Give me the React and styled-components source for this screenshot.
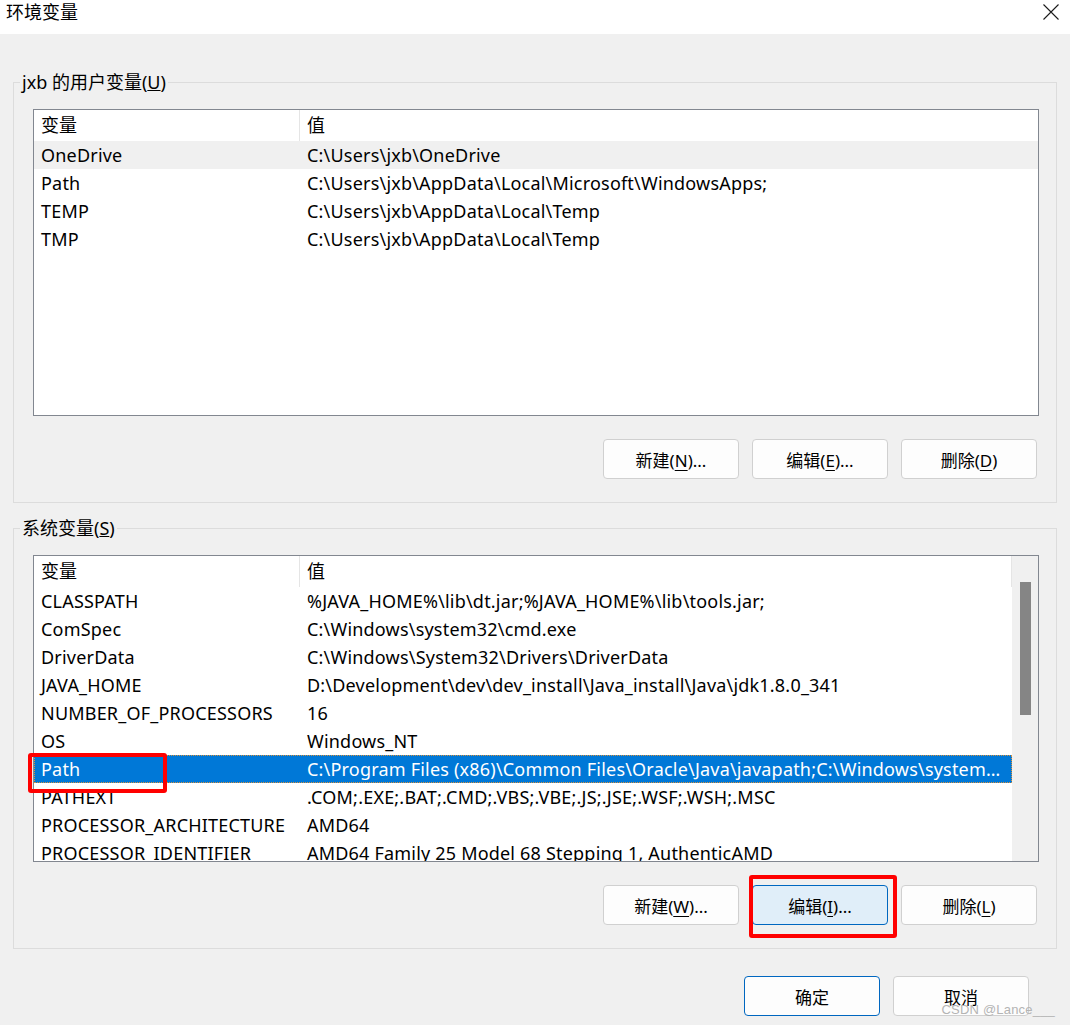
import React from 'react';
import styled, { createGlobalStyle } from 'styled-components';

const GlobalStyle = createGlobalStyle`
  html, body {
    margin: 0;
    padding: 0;
    background: #f0f0f0;
  }
  body {
    font-family: "Noto Sans", "Noto Sans CJK SC", sans-serif;
    color: #000;
  }
`;

const Window = styled.div`
  position: relative;
  width: 1070px;
  height: 1025px;
  overflow: hidden;
  background: #f0f0f0;
  display: flex;
  flex-direction: column;
`;

const TitleBar = styled.div`
  height: 34px;
  flex-shrink: 0;
  background: #ffffff;
  display: flex;
  align-items: flex-start;
  justify-content: space-between;
  padding: 0 11px 0 6px;
`;

const Title = styled.div`
  font-size: 18px;
  line-height: 24px;
`;

const CloseButton = styled.div`
  margin-top: 4px;
  width: 16px;
  height: 16px;
  display: flex;
`;

const Body = styled.div`
  padding: 37px 13px 0 13px;
  display: flex;
  flex-direction: column;
`;

const Group = styled.fieldset`
  margin: ${({ $first }) => ($first ? '0' : '14px 0 0 0')};
  min-width: 0;
  border: 1px solid #dcdcdc;
  padding: 16px 17px 23px 19px;
`;

const Legend = styled.legend`
  margin-left: -13px;
  padding: 0 2px;
  font-size: 18px;
  line-height: 22px;
`;

const ListBox = styled.div`
  height: 307px;
  box-sizing: border-box;
  border: 1px solid #828790;
  background: #ffffff;
  display: flex;
`;

const ListContent = styled.div`
  flex: 1;
  min-width: 0;
  overflow-y: clip;
  overflow-x: visible;
`;

const HeaderRow = styled.div`
  display: grid;
  grid-template-columns: 266px 1fr;
  height: 31px;
  border-right: ${({ $divider }) => ($divider ? '1px solid #e5e5e5' : 'none')};
`;

const HeaderCell = styled.div`
  padding-left: 7px;
  font-size: 18px;
  line-height: 31px;
  border-right: ${({ $sep }) => ($sep ? '1px solid #e5e5e5' : 'none')};
`;

const Row = styled.div`
  position: relative;
  display: grid;
  grid-template-columns: 266px 1fr;
  height: 28px;
  background: ${({ $selected, $hover }) =>
    $selected ? '#0078d7' : $hover ? '#f0f0f0' : 'transparent'};
  color: ${({ $selected }) => ($selected ? '#ffffff' : '#000000')};
  outline: ${({ $selected }) => ($selected ? '1px dotted #d9913c' : 'none')};
  outline-offset: -1px;
`;

const Cell = styled.div`
  padding-left: 7px;
  padding-right: 10px;
  font-size: 18px;
  line-height: 28px;
  letter-spacing: 0.2px;
  white-space: nowrap;
  overflow: hidden;
  text-overflow: ellipsis;
`;

const Scrollbar = styled.div`
  width: 26px;
  flex-shrink: 0;
  background: #f0f0f0;
  display: flex;
  justify-content: center;
  padding-top: 26px;
  box-sizing: border-box;
`;

const Thumb = styled.div`
  width: 11px;
  height: 133px;
  background: #858585;
`;

const ButtonRow = styled.div`
  display: flex;
  justify-content: flex-end;
  gap: 13px;
  margin-top: 23px;
  padding-right: 2px;
`;

const ButtonWrap = styled.div`
  position: relative;
  display: flex;
`;

const Button = styled.button`
  width: 136px;
  height: 40px;
  box-sizing: border-box;
  border-radius: 4px;
  border: 1px solid ${({ $accent }) => ($accent ? '#0067c0' : '#d0d0d0')};
  background: ${({ $pressed }) => ($pressed ? '#e0eef9' : '#fdfdfd')};
  font-family: "Noto Sans", "Noto Sans CJK SC", sans-serif;
  font-size: 17px;
  color: #000;
  padding: 0;
  cursor: default;

  u {
    text-decoration-thickness: 1px;
    text-underline-offset: 3px;
  }
`;

const Annotation = styled.div`
  position: absolute;
  top: ${({ $t }) => $t}px;
  left: ${({ $l }) => $l}px;
  width: ${({ $w }) => $w}px;
  height: ${({ $h }) => $h}px;
  box-sizing: border-box;
  border: 4px solid #ff0000;
  border-radius: 3px;
  pointer-events: none;
  z-index: 2;
`;

const Footer = styled.div`
  display: flex;
  justify-content: flex-end;
  gap: 13px;
  margin-top: 27px;
  padding-right: 41px;
`;

const Watermark = styled.div`
  position: absolute;
  right: 15px;
  bottom: 8px;
  font-family: "Liberation Sans", Arial, sans-serif;
  font-size: 13px;
  color: #b4b4b4;
  letter-spacing: 0.2px;
`;

const userVars = [
  { name: 'OneDrive', value: 'C:\\Users\\jxb\\OneDrive', hover: true },
  { name: 'Path', value: 'C:\\Users\\jxb\\AppData\\Local\\Microsoft\\WindowsApps;' },
  { name: 'TEMP', value: 'C:\\Users\\jxb\\AppData\\Local\\Temp' },
  { name: 'TMP', value: 'C:\\Users\\jxb\\AppData\\Local\\Temp' },
];

const systemVars = [
  { name: 'CLASSPATH', value: '%JAVA_HOME%\\lib\\dt.jar;%JAVA_HOME%\\lib\\tools.jar;' },
  { name: 'ComSpec', value: 'C:\\Windows\\system32\\cmd.exe' },
  { name: 'DriverData', value: 'C:\\Windows\\System32\\Drivers\\DriverData' },
  { name: 'JAVA_HOME', value: 'D:\\Development\\dev\\dev_install\\Java_install\\Java\\jdk1.8.0_341' },
  { name: 'NUMBER_OF_PROCESSORS', value: '16' },
  { name: 'OS', value: 'Windows_NT' },
  {
    name: 'Path',
    value:
      'C:\\Program Files (x86)\\Common Files\\Oracle\\Java\\javapath;C:\\Windows\\system32;C:\\Windows;C:\\Windows\\System32\\Wbem',
    selected: true,
  },
  { name: 'PATHEXT', value: '.COM;.EXE;.BAT;.CMD;.VBS;.VBE;.JS;.JSE;.WSF;.WSH;.MSC' },
  { name: 'PROCESSOR_ARCHITECTURE', value: 'AMD64' },
  { name: 'PROCESSOR_IDENTIFIER', value: 'AMD64 Family 25 Model 68 Stepping 1, AuthenticAMD' },
];

function Label({ text, mnemonic, suffix = '' }) {
  return (
    <>
      {text}(<u>{mnemonic}</u>){suffix}
    </>
  );
}

function CloseIcon() {
  return (
    <svg width="16" height="16" viewBox="0 0 16 16">
      <path d="M0.5 0.5 L15.5 15.5 M15.5 0.5 L0.5 15.5" stroke="#1a1a1a" strokeWidth="1.1" fill="none" />
    </svg>
  );
}

function VarList({ rows, scroll }) {
  return (
    <ListBox>
      <ListContent>
        <HeaderRow $divider={scroll}>
          <HeaderCell $sep>变量</HeaderCell>
          <HeaderCell>值</HeaderCell>
        </HeaderRow>
        {rows.map((r) => (
          <Row key={r.name} $selected={r.selected} $hover={r.hover}>
            <Cell>{r.name}</Cell>
            <Cell>{r.value}</Cell>
            {r.selected && <Annotation $t={-2} $l={-6} $w={139} $h={40} />}
          </Row>
        ))}
      </ListContent>
      {scroll && (
        <Scrollbar>
          <Thumb />
        </Scrollbar>
      )}
    </ListBox>
  );
}

export default function App() {
  return (
    <Window>
      <GlobalStyle />
      <TitleBar>
        <Title>环境变量</Title>
        <CloseButton>
          <CloseIcon />
        </CloseButton>
      </TitleBar>

      <Body>
        <Group $first>
          <Legend>
            jxb 的用户变量(<u>U</u>)
          </Legend>
          <VarList rows={userVars} />
          <ButtonRow>
            <Button><Label text="新建" mnemonic="N" suffix="..." /></Button>
            <Button><Label text="编辑" mnemonic="E" suffix="..." /></Button>
            <Button><Label text="删除" mnemonic="D" /></Button>
          </ButtonRow>
        </Group>

        <Group>
          <Legend>
            系统变量(<u>S</u>)
          </Legend>
          <VarList rows={systemVars} scroll />
          <ButtonRow>
            <Button><Label text="新建" mnemonic="W" suffix="..." /></Button>
            <ButtonWrap>
              <Button $accent $pressed><Label text="编辑" mnemonic="I" suffix="..." /></Button>
              <Annotation $t={-10} $l={-3} $w={148} $h={63} />
            </ButtonWrap>
            <Button><Label text="删除" mnemonic="L" /></Button>
          </ButtonRow>
        </Group>
      </Body>

      <Footer>
        <Button $accent>确定</Button>
        <Button>取消</Button>
      </Footer>

      <Watermark>CSDN @Lance___</Watermark>
    </Window>
  );
}
